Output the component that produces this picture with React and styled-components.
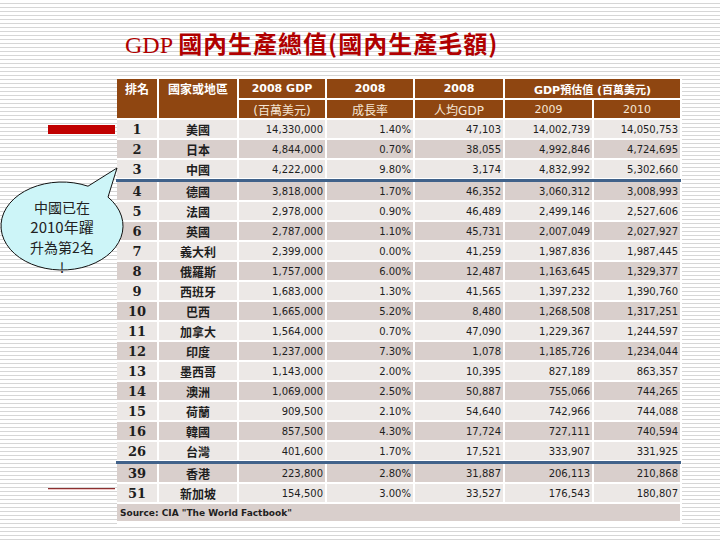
import React from 'react';
import styled, { createGlobalStyle } from 'styled-components';

const COLS = '40px 78px 86px 86px 88px 87px 86px';

const GlobalStyle = createGlobalStyle`
  html, body {
    margin: 0;
    padding: 0;
  }
  body {
    width: 720px;
    height: 540px;
    overflow: hidden;
    background: repeating-linear-gradient(to bottom, #ffffff 0 3px, #d6d6d6 3px 4px);
    font-family: "DejaVu Sans", "Noto Sans CJK TC", sans-serif;
  }
`;

const Page = styled.div`
  position: relative;
  width: 720px;
  height: 540px;
  padding-top: 29px;
  box-sizing: border-box;
`;

const Title = styled.h1`
  margin: 0 0 20px 125px;
  font-family: "Liberation Serif", "Noto Sans CJK TC", serif;
  font-weight: normal;
  font-size: 24px;
  line-height: 28px;
  color: #b00000;
  white-space: nowrap;
`;

const TitleCjk = styled.span`
  font-family: "Noto Sans CJK TC", sans-serif;
  font-weight: 700;
  letter-spacing: 1px;
`;

const Main = styled.div`
  display: flex;
  align-items: flex-start;
`;

const Side = styled.div`
  width: 117px;
  flex: none;
  display: flex;
  flex-direction: column;
`;

const RedMark = styled.div`
  margin: 46px 0 0 48px;
  width: 67px;
  height: 9px;
  background: #c00000;
`;

const BrownRule = styled.div`
  margin: 354px 0 0 48px;
  width: 67px;
  height: 1px;
  background: #8b3030;
  box-shadow: 0 1px 0 #efc4c4;
`;

const Panel = styled.div`
  background: #ffffff;
  padding: 0 2px 3px 0;
  display: flex;
  flex-direction: column;
  gap: 2px;
`;

const HeadGrid = styled.div`
  display: grid;
  grid-template-columns: ${COLS};
  grid-template-rows: 19px 18px;
  gap: 2px;
`;

const HeadCell = styled.div`
  grid-row: ${(p) => (p.$tall ? 'span 2' : 'auto')};
  grid-column: ${(p) => (p.$wide ? 'span 2' : 'auto')};
  background: #8f4611;
  color: ${(p) => (p.$sub ? '#f6e6d6' : '#ffffff')};
  font-weight: ${(p) => (p.$sub ? 'normal' : 'bold')};
  font-size: ${(p) => (p.$cjk ? '12px' : '11px')};
  display: flex;
  justify-content: center;
  align-items: ${(p) => (p.$tall ? 'flex-start' : 'center')};
  padding-top: ${(p) => (p.$tall ? '1px' : '0')};
  white-space: nowrap;
`;

const Row = styled.div`
  position: relative;
  display: grid;
  grid-template-columns: ${COLS};
  gap: 2px;
  height: 18px;
  margin-top: ${(p) => (p.$rule ? '2px' : '0')};

  &::before {
    content: '';
    display: ${(p) => (p.$rule ? 'block' : 'none')};
    position: absolute;
    left: -1px;
    right: -1px;
    top: -3px;
    height: 3px;
    background: #41628a;
  }
`;

const Cell = styled.div`
  background: ${(p) => (p.$alt ? '#d9cfcc' : '#ece8e6')};
  color: #1e1e1e;
  display: flex;
  align-items: center;
  justify-content: ${(p) => (p.$kind === 'num' ? 'flex-end' : 'center')};
  padding: 0 ${(p) => (p.$kind === 'num' ? '2px' : '0')};
  font-family: ${(p) =>
    p.$kind === 'rank'
      ? '"DejaVu Serif", serif'
      : '"DejaVu Sans", "Noto Sans CJK TC", sans-serif'};
  font-size: ${(p) => (p.$kind === 'rank' ? '13px' : p.$kind === 'name' ? '12px' : '10px')};
  font-weight: ${(p) => (p.$kind === 'num' ? 'normal' : 'bold')};
  white-space: nowrap;
`;

const SourceRow = styled.div`
  height: 17px;
  background: #d9cfcc;
  display: flex;
  align-items: center;
  padding-left: 3px;
  font-size: 9px;
  font-weight: bold;
  color: #1e1e1e;
`;

const Callout = styled.div`
  position: absolute;
  left: 0;
  top: 166px;
  width: 126px;
  height: 106px;
  z-index: 2;
`;

const CalloutShape = styled.svg`
  position: absolute;
  inset: 0;
`;

const CalloutText = styled.div`
  position: absolute;
  left: 0;
  top: 31px;
  width: 124px;
  display: flex;
  flex-direction: column;
  align-items: center;
  font-family: "Noto Sans CJK TC", sans-serif;
  font-size: 14px;
  color: #222222;
`;

const CalloutLine = styled.div`
  height: 20px;
  line-height: 20px;
  white-space: nowrap;
  font-size: ${(p) => (p.$big ? '15px' : '14px')};
`;

const rows = [
  ['1', '美國', '14,330,000', '1.40%', '47,103', '14,002,739', '14,050,753'],
  ['2', '日本', '4,844,000', '0.70%', '38,055', '4,992,846', '4,724,695'],
  ['3', '中國', '4,222,000', '9.80%', '3,174', '4,832,992', '5,302,660'],
  ['4', '德國', '3,818,000', '1.70%', '46,352', '3,060,312', '3,008,993'],
  ['5', '法國', '2,978,000', '0.90%', '46,489', '2,499,146', '2,527,606'],
  ['6', '英國', '2,787,000', '1.10%', '45,731', '2,007,049', '2,027,927'],
  ['7', '義大利', '2,399,000', '0.00%', '41,259', '1,987,836', '1,987,445'],
  ['8', '俄羅斯', '1,757,000', '6.00%', '12,487', '1,163,645', '1,329,377'],
  ['9', '西班牙', '1,683,000', '1.30%', '41,565', '1,397,232', '1,390,760'],
  ['10', '巴西', '1,665,000', '5.20%', '8,480', '1,268,508', '1,317,251'],
  ['11', '加拿大', '1,564,000', '0.70%', '47,090', '1,229,367', '1,244,597'],
  ['12', '印度', '1,237,000', '7.30%', '1,078', '1,185,726', '1,234,044'],
  ['13', '墨西哥', '1,143,000', '2.00%', '10,395', '827,189', '863,357'],
  ['14', '澳洲', '1,069,000', '2.50%', '50,887', '755,066', '744,265'],
  ['15', '荷蘭', '909,500', '2.10%', '54,640', '742,966', '744,088'],
  ['16', '韓國', '857,500', '4.30%', '17,724', '727,111', '740,594'],
  ['26', '台灣', '401,600', '1.70%', '17,521', '333,907', '331,925'],
  ['39', '香港', '223,800', '2.80%', '31,887', '206,113', '210,868'],
  ['51', '新加坡', '154,500', '3.00%', '33,527', '176,543', '180,807'],
];

// blue rules are drawn above these ranks
const ruledRanks = ['4', '39'];

function App() {
  return (
    <Page>
      <GlobalStyle />
      <Title>
        GDP <TitleCjk>國內生產總值(國內生產毛額)</TitleCjk>
      </Title>

      <Main>
        <Side>
          <RedMark />
          <BrownRule />
        </Side>

        <Panel>
          <HeadGrid>
            <HeadCell $tall $cjk>排名</HeadCell>
            <HeadCell $tall $cjk>國家或地區</HeadCell>
            <HeadCell>2008 GDP</HeadCell>
            <HeadCell>2008</HeadCell>
            <HeadCell>2008</HeadCell>
            <HeadCell $wide>GDP預估值 (百萬美元)</HeadCell>
            <HeadCell $sub $cjk>(百萬美元)</HeadCell>
            <HeadCell $sub $cjk>成長率</HeadCell>
            <HeadCell $sub $cjk>人均GDP</HeadCell>
            <HeadCell $sub>2009</HeadCell>
            <HeadCell $sub>2010</HeadCell>
          </HeadGrid>

          {rows.map((r, i) => (
            <Row key={r[0]} $rule={ruledRanks.includes(r[0])}>
              {r.map((v, j) => (
                <Cell
                  key={j}
                  $alt={i % 2 === 1}
                  $kind={j === 0 ? 'rank' : j === 1 ? 'name' : 'num'}
                >
                  {v}
                </Cell>
              ))}
            </Row>
          ))}

          <SourceRow>Source: CIA "The World Factbook"</SourceRow>
        </Panel>
      </Main>

      <Callout>
        <CalloutShape width="126" height="106" viewBox="0 0 126 106">
          <path
            d="M88 20.2 L117 2 L108 31.1 A61 44 0 1 1 88 20.2 Z"
            fill="#cdf5f8"
            stroke="#111111"
            strokeWidth="1"
          />
        </CalloutShape>
        <CalloutText>
          <CalloutLine>中國已在</CalloutLine>
          <CalloutLine $big>2010年躍</CalloutLine>
          <CalloutLine>升為第2名</CalloutLine>
          <CalloutLine>!</CalloutLine>
        </CalloutText>
      </Callout>
    </Page>
  );
}

export default App;
